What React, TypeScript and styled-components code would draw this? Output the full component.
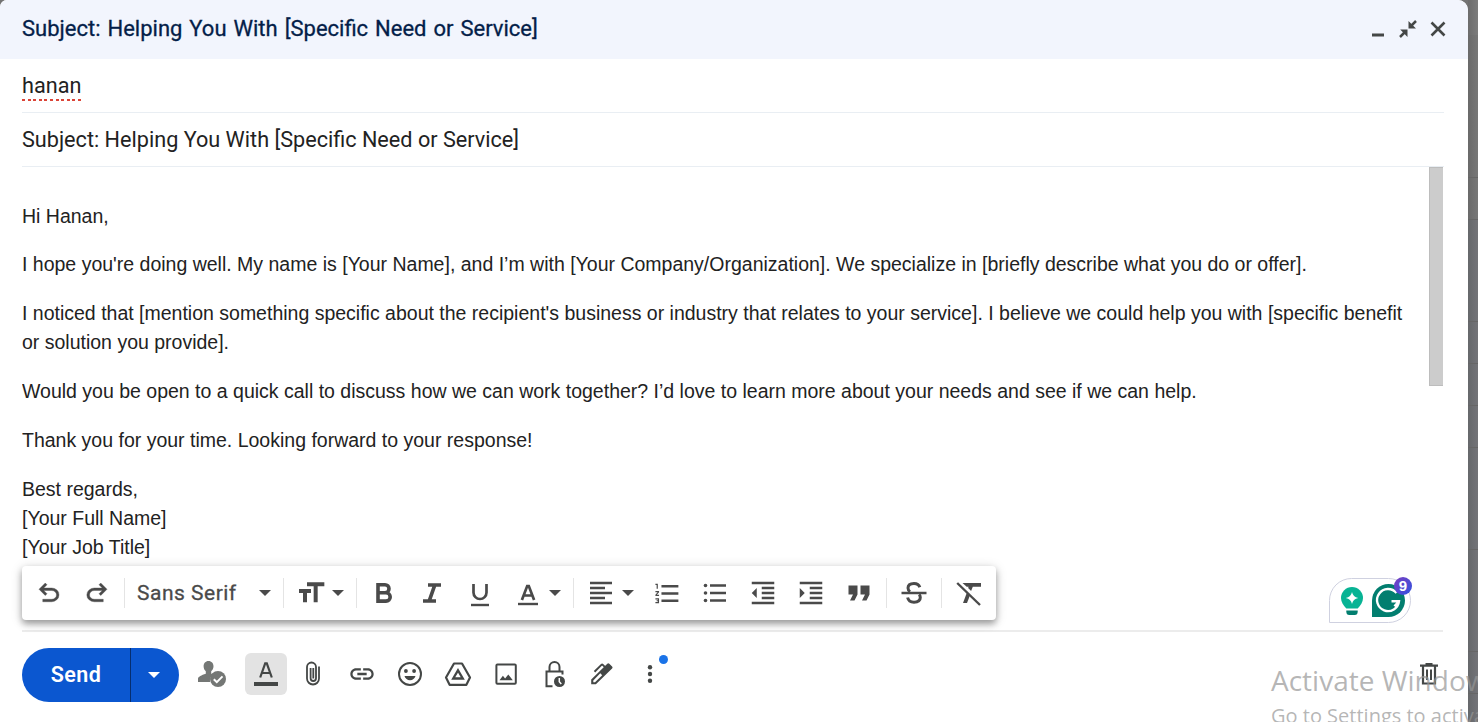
import { ReactNode } from 'react';
import styled, { createGlobalStyle } from 'styled-components';
import {
  MdFormatIndentDecrease,
  MdFormatIndentIncrease,
  MdFormatListNumbered,
  MdFormatQuote,
  MdFormatSize,
  MdLink,
} from 'react-icons/md';

const paragraphs = [
  ['Hi Hanan,'],
  [
    'I hope you\'re doing well. My name is [Your Name], and I’m with [Your Company/Organization]. We specialize in [briefly describe what you do or offer].',
  ],
  [
    'I noticed that [mention something specific about the recipient\'s business or industry that relates to your service]. I believe we could help you with [specific benefit',
    'or solution you provide].',
  ],
  [
    'Would you be open to a quick call to discuss how we can work together? I’d love to learn more about your needs and see if we can help.',
  ],
  ['Thank you for your time. Looking forward to your response!'],
  ['Best regards,', '[Your Full Name]', '[Your Job Title]'],
];

type IconProps = { w: number; h: number; children: ReactNode };

const Icon = ({ w, h, children }: IconProps) => (
  <svg width={w} height={h} viewBox={`0 0 ${w} ${h}`} fill="none" stroke="currentColor" strokeWidth="2">
    {children}
  </svg>
);

const CaretIcon = () => (
  <svg width="12" height="6" viewBox="0 0 12 6">
    <path d="M0 0h12L6 6z" fill="currentColor" />
  </svg>
);

const UndoIcon = () => (
  <svg width="30" height="30" viewBox="0 -960 960 960" fill="currentColor" stroke="currentColor" strokeWidth="12">
    <path d="M280-200v-80h284q63 0 109.500-40T720-420q0-60-46.500-100T564-560H312l104 104-56 56-200-200 200-200 56 56-104 104h252q97 0 169.500 63T800-420q0 94-72.500 157T564-200H280Z" />
  </svg>
);

const RedoIcon = () => (
  <svg width="30" height="30" viewBox="0 -960 960 960" fill="currentColor" stroke="currentColor" strokeWidth="12">
    <path d="M396-200q-97 0-169.500-63T154-420q0-94 72.500-157T396-640h252L544-744l56-56 200 200-200 200-56-56 104-104H396q-63 0-109.500 40T240-420q0 60 46.500 100T396-280h284v80H396Z" />
  </svg>
);

const BoldIcon = () => (
  <Icon w={30} h={30}>
    <path d="M9 6.700h7a4 4 0 0 1 0 8H9zM9 14.700h8a4.200 4.200 0 0 1 0 8.400H9z" strokeWidth="3.600" />
  </Icon>
);

const ItalicIcon = () => (
  <Icon w={30} h={30}>
    <path d="M11 7h13M6 23h13M17.800 7l-5.600 16" strokeWidth="3.700" />
  </Icon>
);

const UnderlineIcon = () => (
  <Icon w={30} h={30}>
    <path d="M8.500 6v8.500a6.500 6.500 0 0 0 13 0V6" strokeWidth="2.700" />
    <path d="M6 27h18" strokeWidth="2.400" />
  </Icon>
);

const TextColorIcon = () => (
  <Icon w={30} h={30}>
    <path d="M8.900 22 14.200 8h1.600l5.300 14M11 17.500h8" strokeWidth="2.700" />
    <path d="M5 26h20" strokeWidth="2.400" />
  </Icon>
);

const AlignIcon = () => (
  <Icon w={30} h={30}>
    <path d="M4 5h22M4 10h15M4 15h22M4 20h15M4 25h22" strokeWidth="2.300" />
  </Icon>
);

const BulletsIcon = () => (
  <Icon w={30} h={30}>
    <path d="M10 7.500h16M10 15h16M10 22.500h16" strokeWidth="2.500" />
    <g fill="currentColor" stroke="none">
      <circle cx="5.500" cy="7.500" r="1.800" />
      <circle cx="5.500" cy="15" r="1.800" />
      <circle cx="5.500" cy="22.500" r="1.800" />
    </g>
  </Icon>
);

const StrikeIcon = () => (
  <Icon w={30} h={30}>
    <path d="M20.800 9.300C20 6.700 18 5.500 15 5.500c-3.600 0-6 1.700-6 4.500 0 1.700.8 2.900 2.100 3.700M8.600 19.500c.7 3 3.100 4.700 6.400 4.700 3.800 0 6.300-1.700 6.300-4.600 0-1.300-.4-2.400-1.200-3.200" strokeWidth="3" />
    <path d="M2.500 15h25" strokeWidth="2.500" />
  </Icon>
);

const ClearIcon = () => (
  <Icon w={30} h={30}>
    <g fill="currentColor" stroke="none">
      <path d="M8.500 5H27v3.800h-8.200l-1.700 4.200-3-3 .5-1.200h-1.900z" />
      <path d="M13 14.200l3 3-3 7.800H9z" />
    </g>
    <path d="M3.200 5 26 27" strokeWidth="2.400" />
  </Icon>
);

const ConfidentialPersonIcon = () => (
  <svg width="30" height="28" viewBox="0 0 30 28" fill="currentColor">
    <path d="M11.500 1c3 0 5 2.300 5 5.200 0 2.200-1 3.900-2.300 5v2.600l1.800.8a8 8 0 0 0-3 7.400H1v-3.300c0-2 3.500-3.600 7.800-5v-2.500C7.500 10.100 6.600 8.400 6.600 6.200 6.600 3.300 8.500 1 11.500 1z" />
    <circle cx="21" cy="19" r="8" />
    <path d="M16.800 19.200l3 3 5.700-5.800" fill="none" stroke="#fff" strokeWidth="2" />
  </svg>
);

const FormatIcon = () => (
  <Icon w={26} h={26}>
    <path d="M7.200 16.500 12.200 2.300h1.600l5 14.200M9.200 12h7.600" strokeWidth="2.200" />
    <path d="M1 23h24" strokeWidth="4" />
  </Icon>
);

const ClipIcon = () => (
  <Icon w={18} h={26}>
    <path d="M14 5.500v12a6 6 0 0 1-12 0V6a4.500 4.500 0 0 1 9 0v11.300a2.700 2.700 0 0 1-5.400 0V7M8.300 7v10.500" strokeWidth="1.800" />
  </Icon>
);

const EmojiIcon = () => (
  <Icon w={26} h={26}>
    <circle cx="13" cy="13" r="11" />
    <g fill="currentColor" stroke="none">
      <circle cx="8.900" cy="10" r="1.900" />
      <circle cx="17.100" cy="10" r="1.900" />
      <path d="M7.500 15h11c-.7 2.600-2.900 4.200-5.500 4.200S8.200 17.600 7.500 15z" />
    </g>
  </Icon>
);

const DriveIcon = () => (
  <Icon w={28} h={26}>
    <path d="M10 2.500h8L26 16.500l-3.600 7.300H5.600L2 16.500z" strokeWidth="2.200" strokeLinejoin="round" />
    <path d="M14 9.300l4.800 8.200H9.200z" strokeWidth="2.300" />
  </Icon>
);

const ImageIcon = () => (
  <Icon w={24} h={24}>
    <rect x="2.400" y="2.400" width="19.400" height="19.400" rx="1" />
    <path d="M5.500 18.300l3.400-4.500 2.200 2.800 3.200-4.200 4.500 5.900z" fill="currentColor" stroke="none" />
  </Icon>
);

const LockIcon = () => (
  <Icon w={22} h={28}>
    <path d="M9.500 26.300H3.500V11.500h16v3M6.500 11V7a5 5 0 0 1 10 0v4" />
    <circle cx="16.500" cy="21.500" r="5.500" fill="currentColor" stroke="none" />
    <path d="M16.300 18v3.800l2 2.200" stroke="#fff" strokeWidth="1.500" />
  </Icon>
);

const PenIcon = () => (
  <Icon w={24} h={24}>
    <path
      d="M1.200 22.300v-4.700L17.300 1.700q1-1 2 0l2.800 2.700q1 1 0 2L5.900 22.300zM3.300 20.200H5l7.200-7-1.900-1.900-7 7.100z"
      fill="currentColor"
      fillRule="evenodd"
      stroke="none"
    />
    <path d="M4.500 9.700l6.900-6.800q.7-.6 1.400 0l2.500 2.500" />
  </Icon>
);

const MoreIcon = () => (
  <svg width="6" height="20" viewBox="0 0 6 20" fill="currentColor">
    <circle cx="3" cy="3.300" r="2.200" />
    <circle cx="3" cy="10" r="2.200" />
    <circle cx="3" cy="16.700" r="2.200" />
  </svg>
);

const TrashIcon = () => (
  <Icon w={20} h={24}>
    <path d="M1 3.700h18M6.500 2h7M4 4v17.500h12V4" strokeWidth="2.200" />
    <path d="M8 7.500v10.500M12 7.500v10.500" />
  </Icon>
);

const MinimizeIcon = () => (
  <Icon w={12} h={20}>
    <path d="M0 16h12" strokeWidth="3" />
  </Icon>
);

const ShrinkIcon = () => (
  <Icon w={18} h={18}>
    <path d="M17 1l-5 5M1 17l5-5" strokeWidth="2.500" />
    <path d="M9.500 1v7.500H17zM1.200 9.500h7.300v7.500z" fill="currentColor" stroke="none" />
  </Icon>
);

const CloseIcon = () => (
  <Icon w={16} h={16}>
    <path d="M1.500 1.500l13 13M14.500 1.500l-13 13" strokeWidth="2.600" />
  </Icon>
);

const BulbIcon = () => (
  <svg width="24" height="30" viewBox="0 0 24 30">
    <path d="M12 1a11 11 0 0 1 11 11c0 4-2.200 7-5.300 10.500H6.300C3.200 19 1 16 1 12A11 11 0 0 1 12 1z" fill="#07b394" />
    <path d="M12 6q1 5 6.200 6Q13 13 12 18q-1-5-6.200-6Q11 11 12 6z" fill="#fff" />
    <path d="M6.300 24.500h11.400v1q0 3.500-3 3.500H9.300q-3 0-3-3.500z" fill="#027e6f" />
  </svg>
);

const GrammarIcon = () => (
  <svg width="33" height="33" viewBox="0 0 33 33">
    <path d="M0 33V16.500A16.500 16.500 0 1 1 16.500 33z" fill="#027e6f" />
    <path d="M24.500 9A11 11 0 1 0 27 17.200h-7.500M27 17.200l-4.600 5" fill="none" stroke="#fff" strokeWidth="2.400" />
  </svg>
);

const App = () => (
  <Screen>
    <GlobalStyle />
    <Compose>
      <Header>
        <Title>Subject: Helping You With [Specific Need or Service]</Title>
        <WindowButtons>
          <MinimizeIcon />
          <ShrinkIcon />
          <CloseIcon />
        </WindowButtons>
      </Header>
      <Field>
        <Misspelled>hanan</Misspelled>
      </Field>
      <Field>
        <SubjectText>Subject: Helping You With [Specific Need or Service]</SubjectText>
      </Field>
      <Editor>
        <Message>
          {paragraphs.map((lines, i) => (
            <Paragraph key={i}>
              {lines.map((line) => (
                <Line key={line}>{line}</Line>
              ))}
            </Paragraph>
          ))}
        </Message>
        <Scrollbar />
      </Editor>
      <FormatArea>
        <FormatBar>
          <Slot><UndoIcon /></Slot>
          <Slot><RedoIcon /></Slot>
          <Separator $left={3} />
          <FontSelect>
            <FontName>Sans Serif</FontName>
            <CaretIcon />
          </FontSelect>
          <Separator $left={12} $right={3} />
          <Slot><MdFormatSize size={32} /></Slot>
          <SlotCaret><CaretIcon /></SlotCaret>
          <Separator $left={12} $right={3} />
          <Slot><BoldIcon /></Slot>
          <Slot><ItalicIcon /></Slot>
          <Slot><UnderlineIcon /></Slot>
          <Slot><TextColorIcon /></Slot>
          <SlotCaret><CaretIcon /></SlotCaret>
          <Separator $left={12} $right={3} />
          <Slot><AlignIcon /></Slot>
          <SlotCaret $right={9}><CaretIcon /></SlotCaret>
          <Slot><MdFormatListNumbered size={29} /></Slot>
          <Slot><BulletsIcon /></Slot>
          <Slot><MdFormatIndentDecrease size={30} /></Slot>
          <Slot><MdFormatIndentIncrease size={30} /></Slot>
          <Slot><MdFormatQuote size={36} /></Slot>
          <Separator $left={3} $right={3} />
          <Slot><StrikeIcon /></Slot>
          <Separator $left={3} $right={3} />
          <Slot><ClearIcon /></Slot>
        </FormatBar>
        <Assistant>
          <BulbIcon />
          <GrammarIcon />
          <Badge>9</Badge>
        </Assistant>
      </FormatArea>
      <Footer>
        <SendGroup>
          <SendButton>Send</SendButton>
          <SendMenu><CaretIcon /></SendMenu>
        </SendGroup>
        <Tools>
          <Tool $muted><ConfidentialPersonIcon /></Tool>
          <Tool $active><FormatIcon /></Tool>
          <Tool><ClipIcon /></Tool>
          <Tool><MdLink size={28} /></Tool>
          <Tool><EmojiIcon /></Tool>
          <Tool><DriveIcon /></Tool>
          <Tool><ImageIcon /></Tool>
          <Tool><LockIcon /></Tool>
          <Tool><PenIcon /></Tool>
          <Tool>
            <MoreIcon />
            <NewDot />
          </Tool>
        </Tools>
        <Discard><TrashIcon /></Discard>
      </Footer>
    </Compose>
    <Backdrop>
      <BackdropHeader />
      {[143, 42, 102, 42, 42, 42, 102, 102, 42, 42].map((height, i) => (
        <BackdropRow key={i} $height={height} $warm={i < 2} />
      ))}
    </Backdrop>
    <Watermark>
      <WatermarkTitle>Activate Windows</WatermarkTitle>
      <WatermarkHint>Go to Settings to activate Windows.</WatermarkHint>
    </Watermark>
  </Screen>
);

export default App;

const GlobalStyle = createGlobalStyle`
  * {
    box-sizing: border-box;
  }

  body {
    margin: 0;
    overflow: hidden;
  }

  svg {
    display: block;
    flex: none;
  }
`;

const Screen = styled.div`
  position: relative;
  display: flex;
  width: 1478px;
  height: 722px;
  overflow: hidden;
  background: #737373;
  font-family: Roboto, 'Liberation Sans', sans-serif;
  color: #444746;
`;

const Compose = styled.main`
  display: flex;
  flex-direction: column;
  flex: none;
  width: 1468px;
  height: 722px;
  border-radius: 7px 10px 0 0;
  overflow: hidden;
  background: #fff;
`;

const Header = styled.header`
  display: flex;
  align-items: center;
  justify-content: space-between;
  flex: none;
  height: 59px;
  padding: 0 22px 2px;
  background: #f2f5fd;
`;

const Title = styled.h1`
  margin: 0;
  font-size: 22px;
  font-weight: 400;
  line-height: 56px;
  word-spacing: 1.5px;
  white-space: nowrap;
  color: #041e49;
  -webkit-text-stroke: 0.3px #041e49;
`;

const WindowButtons = styled.div`
  display: flex;
  align-items: center;
  gap: 13px;

  svg:first-child {
    margin-right: 2px;
  }
`;

const Field = styled.div`
  display: flex;
  align-items: center;
  flex: none;
  height: 54px;
  margin: 0 24px 0 22px;
  border-bottom: 1px solid #e9eef3;
  font-size: 21.65px;
  color: #222;
`;

const Misspelled = styled.span`
  height: 30px;
  line-height: 30px;
  background: repeating-linear-gradient(90deg, #db4437 0 3px, transparent 3px 5.6px) left bottom / 100% 2px no-repeat;
`;

const SubjectText = styled.span`
  white-space: nowrap;
`;

const Editor = styled.div`
  display: flex;
  justify-content: space-between;
  flex: none;
  height: 395px;
  margin: 0 25px 0 22px;
  overflow: hidden;
`;

const Message = styled.div`
  padding-top: 34.7px;
  font-family: 'Liberation Sans', Arial, sans-serif;
  font-size: 19.5px;
  line-height: 29.25px;
  color: #222;
`;

const Paragraph = styled.p`
  margin: 0 0 19.5px;
`;

const Line = styled.span`
  display: block;
  white-space: nowrap;
`;

const Scrollbar = styled.div`
  flex: none;
  width: 14px;
  height: 219px;
  border: 1px solid #bdbdbd;
  border-right: 0;
  background: #ccc;
`;

const FormatArea = styled.div`
  display: flex;
  justify-content: space-between;
  flex: none;
  height: 70px;
  margin: 0 25px 0 22px;
  padding: 4px 32px 0 0;
  border-bottom: 2px solid #ececec;
`;

const FormatBar = styled.div`
  display: flex;
  align-items: center;
  width: 974px;
  height: 54px;
  padding-left: 3px;
  border-radius: 4px;
  background: #fff;
  box-shadow: 0 4px 6px rgba(0, 0, 0, 0.3), 0 2px 12px rgba(0, 0, 0, 0.18);
  color: #4a4a4a;
`;

const Slot = styled.div`
  display: flex;
  align-items: center;
  justify-content: center;
  flex: none;
  width: 48px;
  height: 48px;
`;

const SlotCaret = styled.div<{ $right?: number }>`
  flex: none;
  margin: 0 ${({ $right = 0 }) => $right}px 0 -3px;
`;

const Separator = styled.div<{ $left?: number; $right?: number }>`
  flex: none;
  width: 1px;
  height: 30px;
  margin: 0 ${({ $right = 0 }) => $right}px 0 ${({ $left = 0 }) => $left}px;
  background: #e4e4e4;
`;

const FontSelect = styled.div`
  display: flex;
  align-items: center;
  justify-content: space-between;
  flex: none;
  width: 146px;
  padding-left: 12px;
`;

const FontName = styled.span`
  font-size: 21px;
  letter-spacing: 0.5px;
  white-space: nowrap;
  -webkit-text-stroke: 0.3px #4a4a4a;
`;

const Assistant = styled.div`
  position: relative;
  display: flex;
  align-items: center;
  gap: 8px;
  width: 82px;
  height: 45px;
  margin-top: 12px;
  padding-left: 10px;
  border: 1.5px solid #cfd1e0;
  border-radius: 23px 23px 23px 0;
  background: #fff;
`;

const Badge = styled.span`
  position: absolute;
  top: -2px;
  right: -2px;
  width: 18px;
  height: 18px;
  border-radius: 50%;
  background: linear-gradient(135deg, #7a3fc0, #2f52e0);
  font: bold 15px/18px 'Liberation Sans', Arial, sans-serif;
  text-align: center;
  color: #fff;
`;

const Footer = styled.footer`
  display: flex;
  align-items: center;
  flex: none;
  height: 86px;
  padding: 0 29px 0 22px;
`;

const SendGroup = styled.div`
  display: flex;
  flex: none;
  width: 157px;
  height: 54px;
  border-radius: 27px;
  overflow: hidden;
  background: #0b57d0;
  color: #fff;
`;

const SendButton = styled.div`
  width: 109px;
  border-right: 1px solid #062e6f;
  font-size: 21.5px;
  font-weight: 600;
  letter-spacing: 0.4px;
  line-height: 54px;
  text-align: center;
`;

const SendMenu = styled.div`
  display: flex;
  align-items: center;
  justify-content: center;
  width: 46px;
`;

const Tools = styled.div`
  display: flex;
  align-items: center;
  gap: 6px;
  margin: -2px 0 0 12px;
`;

const Tool = styled.div<{ $active?: boolean; $muted?: boolean }>`
  position: relative;
  display: flex;
  align-items: center;
  justify-content: center;
  width: 42px;
  height: 42px;
  margin-right: ${({ $muted }) => ($muted ? 6 : 0)}px;
  border-radius: 6px;
  background: ${({ $active }) => ($active ? '#e3e3e3' : 'transparent')};
  color: ${({ $muted }) => ($muted ? '#747775' : '#444746')};
`;

const NewDot = styled.span`
  position: absolute;
  top: 2px;
  right: 3px;
  width: 9px;
  height: 9px;
  border-radius: 50%;
  background: #1a73e8;
`;

const Discard = styled.div`
  margin: -2px 0 0 auto;
`;

const Backdrop = styled.div`
  flex: 1;
`;

const BackdropHeader = styled.div`
  height: 35px;
  background: linear-gradient(90deg, #6c6c6c, #7c7c7c);
`;

const BackdropRow = styled.div<{ $height: number; $warm: boolean }>`
  height: ${({ $height }) => $height}px;
  border-bottom: 1px solid #666;
  background: ${({ $warm }) =>
    $warm ? 'linear-gradient(90deg, #6a6a6a, #777)' : 'linear-gradient(90deg, #66686b, #737478)'};
`;

const Watermark = styled.div`
  position: absolute;
  top: 660px;
  left: 1271px;
  font-family: 'Open Sans', 'Noto Sans', sans-serif;
  white-space: nowrap;
  color: rgba(150, 150, 150, 0.7);
`;

const WatermarkTitle = styled.div`
  font-size: 28px;
  line-height: 41px;
`;

const WatermarkHint = styled.div`
  font-size: 20px;
  line-height: 30px;
`;
